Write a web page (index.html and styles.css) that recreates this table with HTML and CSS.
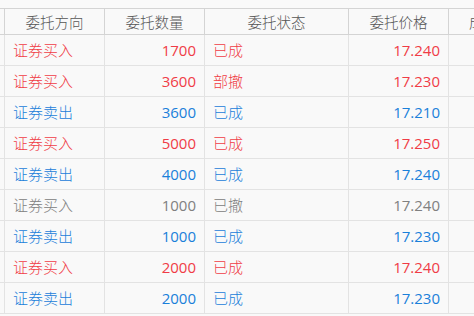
FILE: index.html
```html
<!DOCTYPE html>
<html lang="zh">
<head>
<meta charset="utf-8">
<link rel="stylesheet" href="styles.css">
</head>
<body>
<div class="viewport">
<table class="orders">
<colgroup>
<col class="c-pre"><col class="c-dir"><col class="c-qty"><col class="c-status"><col class="c-price"><col class="c-deal">
</colgroup>
<thead>
<tr><th></th><th>委托方向</th><th>委托数量</th><th>委托状态</th><th>委托价格</th><th class="deal">成交数量</th></tr>
</thead>
<tbody>
<tr class="buy"><td></td><td>证券买入</td><td class="num">1700</td><td>已成</td><td class="num">17.240</td><td></td></tr>
<tr class="buy"><td></td><td>证券买入</td><td class="num">3600</td><td>部撤</td><td class="num">17.230</td><td></td></tr>
<tr class="sell"><td></td><td>证券卖出</td><td class="num">3600</td><td>已成</td><td class="num">17.210</td><td></td></tr>
<tr class="buy"><td></td><td>证券买入</td><td class="num">5000</td><td>已成</td><td class="num">17.250</td><td></td></tr>
<tr class="sell"><td></td><td>证券卖出</td><td class="num">4000</td><td>已成</td><td class="num">17.240</td><td></td></tr>
<tr class="cancel"><td></td><td>证券买入</td><td class="num">1000</td><td>已撤</td><td class="num">17.240</td><td></td></tr>
<tr class="sell"><td></td><td>证券卖出</td><td class="num">1000</td><td>已成</td><td class="num">17.230</td><td></td></tr>
<tr class="buy"><td></td><td>证券买入</td><td class="num">2000</td><td>已成</td><td class="num">17.240</td><td></td></tr>
<tr class="sell"><td></td><td>证券卖出</td><td class="num">2000</td><td>已成</td><td class="num">17.230</td><td></td></tr>
</tbody>
</table>
</div>
</body>
</html>
```
FILE: styles.css
```css
html, body {
  margin: 0;
  padding: 0;
  background: #f9f9f9;
}
.viewport {
  width: 474px;
  height: 316px;
  overflow: hidden;
  padding-top: 8px;
  box-sizing: border-box;
}
.orders {
  table-layout: fixed;
  border-collapse: separate;
  border-spacing: 0;
  width: 606px;
  margin-left: -56px;
  font-family: "Open Sans", "Noto Sans CJK SC", sans-serif;
  font-size: 15px;
}
.c-pre { width: 61px; }
.c-dir { width: 100px; }
.c-qty { width: 100px; }
.c-status { width: 144px; }
.c-price { width: 100px; }
.c-deal { width: 101px; }
.orders th, .orders td {
  box-sizing: border-box;
  padding: 0 8px;
  white-space: nowrap;
  overflow: hidden;
  text-align: left;
}
.orders th {
  height: 27px;
  font-weight: 300;
  color: #555;
  text-align: center;
  border-top: 1px solid #d4d4d4;
  border-bottom: 1px solid #d4d4d4;
  border-right: 1px solid #d4d4d4;
  font-family: "Noto Sans CJK SC", sans-serif;
  font-size: 14.5px;
  line-height: 24px;
}
.orders th.deal {
  text-align: left;
  padding-left: 20px;
}
.orders td {
  height: 31px;
  border-bottom: 1px solid #e3e3e3;
  border-right: 1px solid #e3e3e3;
  line-height: 30px;
  font-weight: 300;
  font-family: "Noto Sans CJK SC", sans-serif;
}
.orders td.num {
  text-align: right;
  font-weight: normal;
  font-family: "Open Sans", sans-serif;
  font-size: 15px;
}
.buy td { color: #f03c46; }
.sell td { color: #1a80da; }
.cancel td { color: #808080; }
```
